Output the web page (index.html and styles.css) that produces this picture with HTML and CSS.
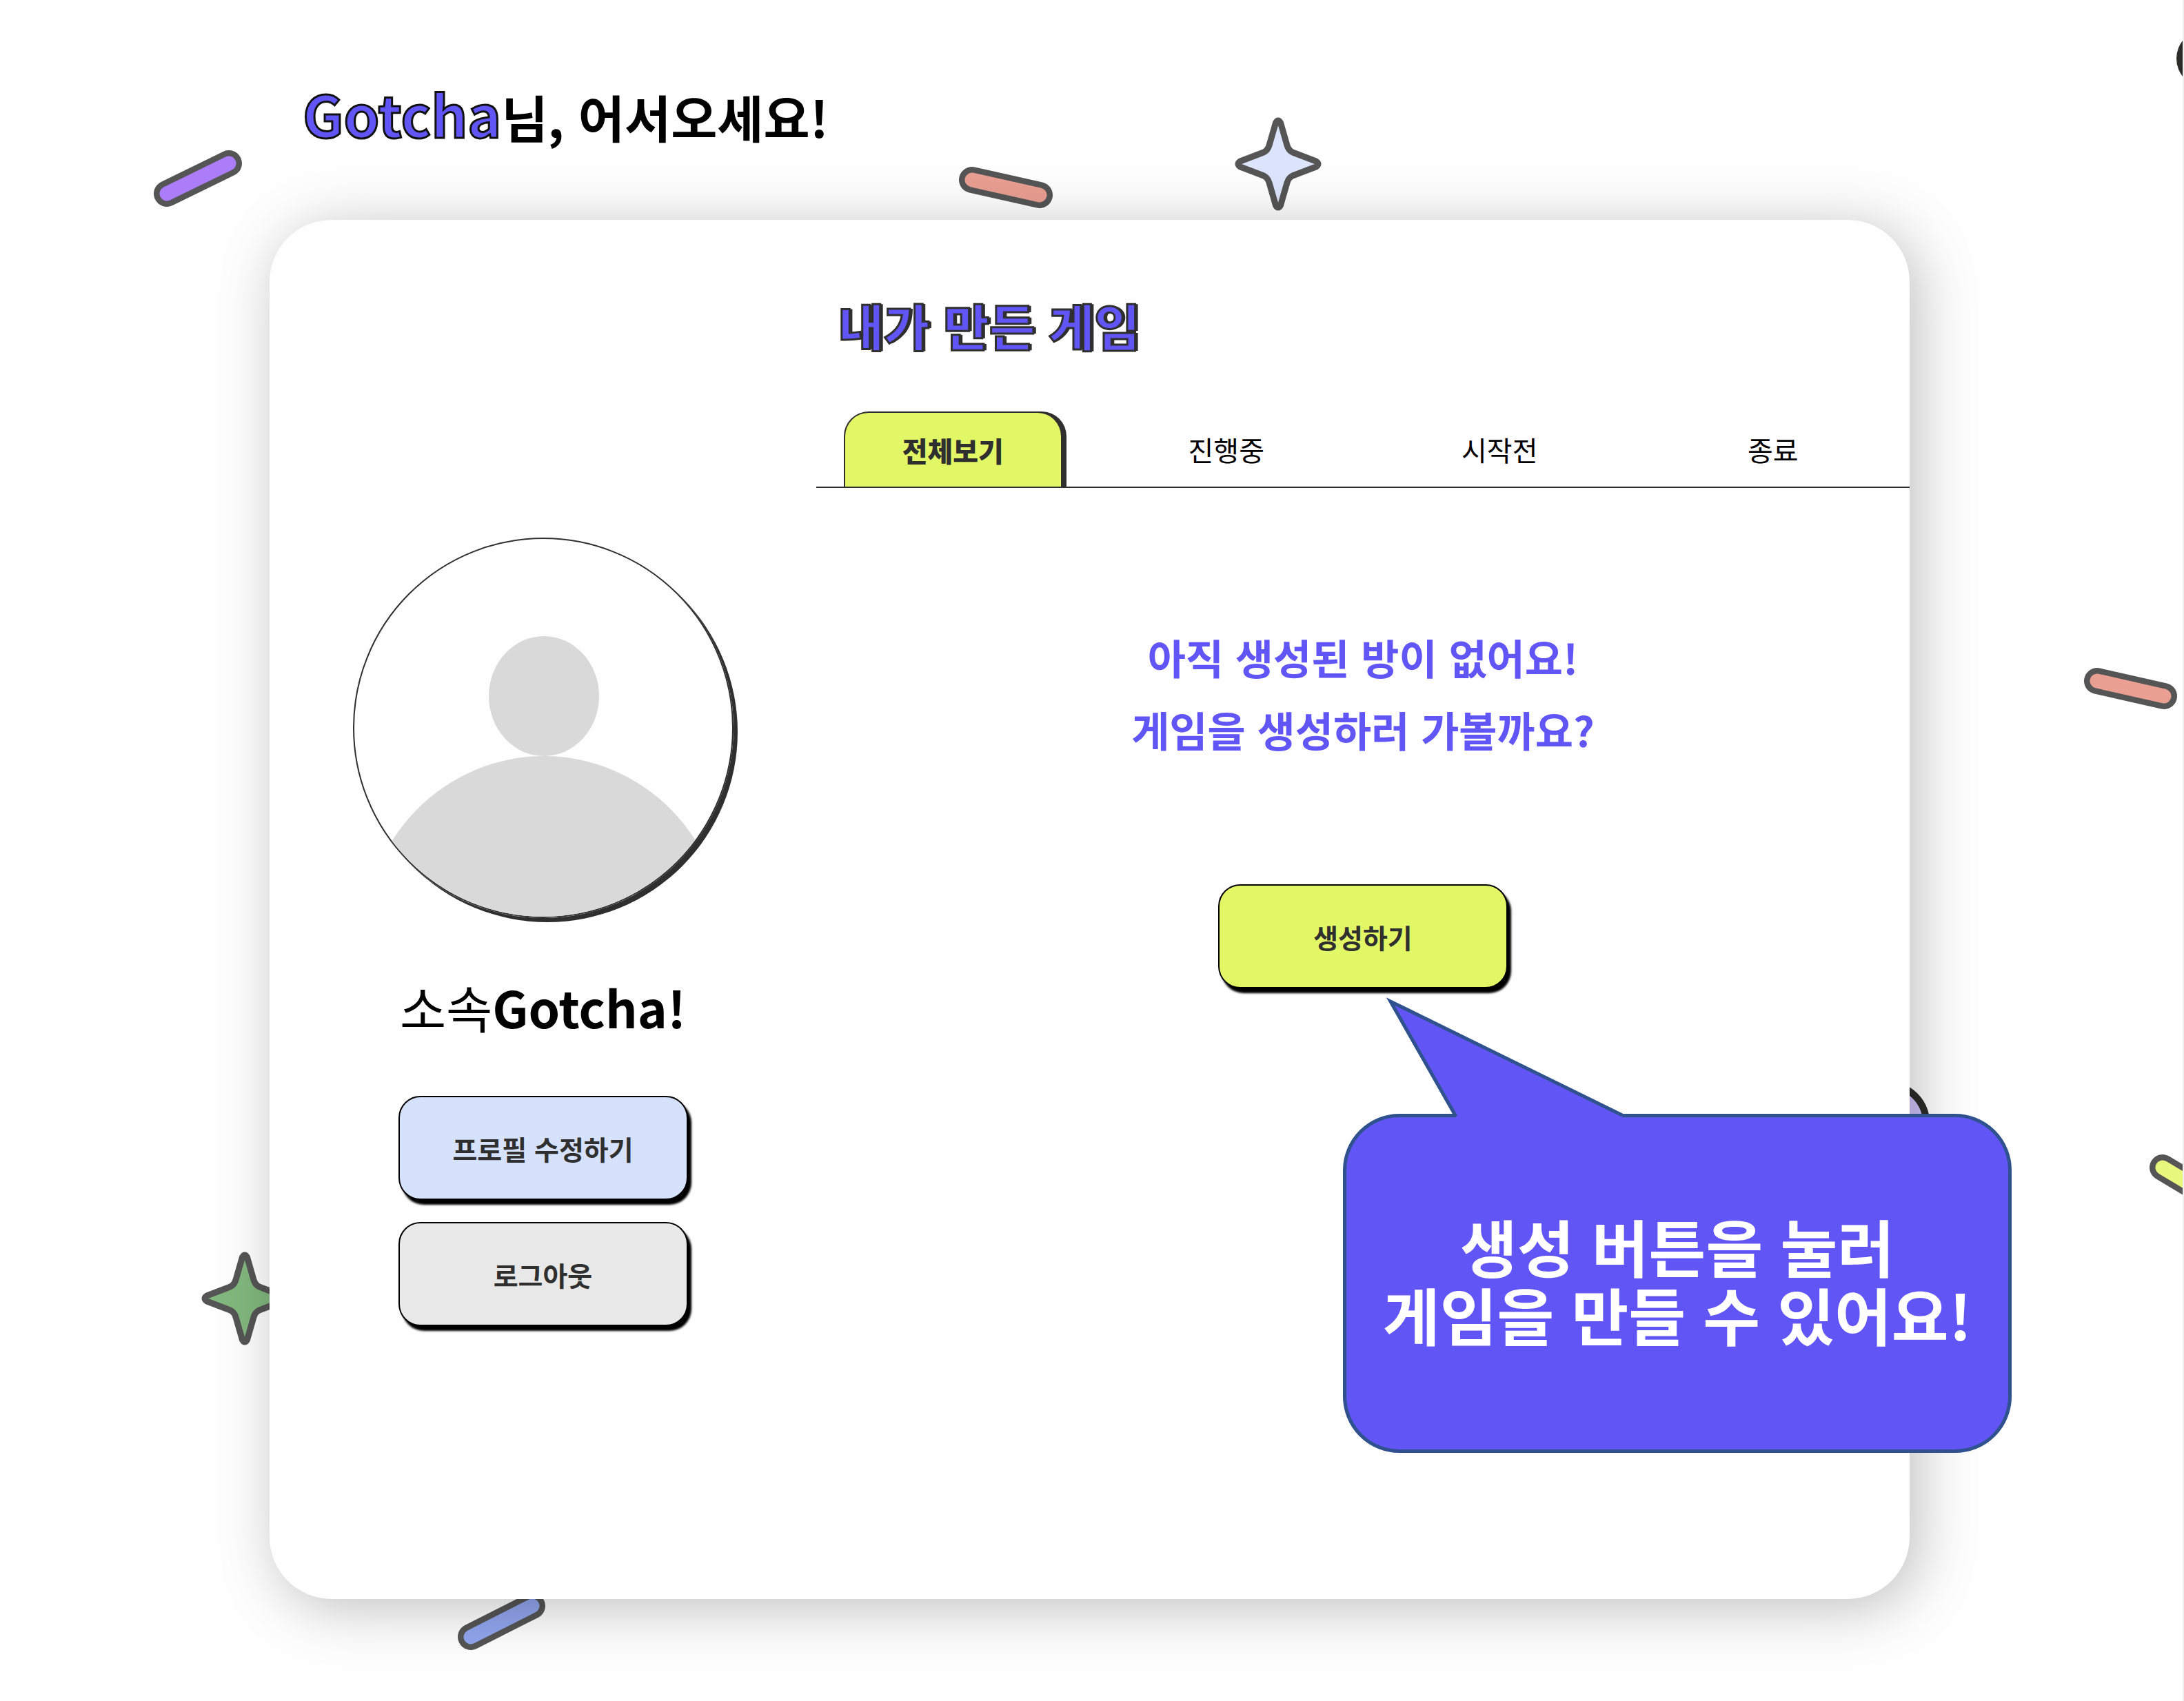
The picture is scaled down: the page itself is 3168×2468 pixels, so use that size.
FILE: index.html
```html
<!DOCTYPE html>
<html lang="ko">
<head>
<meta charset="utf-8">
<meta name="viewport" content="width=device-width, initial-scale=1">
<title>Gotcha 마이페이지</title>
<link rel="stylesheet" href="styles.css">
</head>
<body>
<div class="page">
  <svg class="deco deco-purple" viewBox="0 0 128 82" aria-hidden="true"><path class="pill-edge" d="M19 63 109 19"/><path class="pill-fill" stroke="#ab7df9" d="M19 63 109 19"/></svg>
  <svg class="deco deco-coral" viewBox="0 0 136 60" aria-hidden="true"><path class="pill-edge" d="M19 19 117 41"/><path class="pill-fill" stroke="#e99f92" d="M19 19 117 41"/></svg>
  <svg class="deco deco-sky" viewBox="-64 -70 128 140" aria-hidden="true"><path class="star" fill="#dde5fd" d="M-3.5-60Q0-66 3.5-60L13-27Q15-20 21-17L55-4Q61 0 55 4L21 17Q15 20 13 27L3.500 60Q0 66-3.500 60L-13 27Q-15 20-21 17L-55 4Q-61 0-55-4L-21-17Q-15-20-13-27Z"/></svg>
  <svg class="deco deco-dot" viewBox="0 0 84 84" aria-hidden="true"><circle cx="42" cy="42" r="42" fill="#2b2b2a"/></svg>
  <svg class="deco deco-coral-right" viewBox="0 0 136 60" aria-hidden="true"><path class="pill-edge" d="M19 19 116 41"/><path class="pill-fill" stroke="#e99f92" d="M19 19 116 41"/></svg>
  <svg class="deco deco-yellow" viewBox="0 0 120 90" aria-hidden="true"><path class="pill-edge" d="M19 19 101 68"/><path class="pill-fill" stroke="#e7f97c" d="M19 19 101 68"/></svg>
  <svg class="deco deco-ball" viewBox="0 0 120 120" aria-hidden="true"><circle cx="60" cy="60" r="55" fill="#cfc4fb" stroke="#2b2b2a" stroke-width="10"/></svg>
  <svg class="deco deco-green" viewBox="-64 -70 128 140" aria-hidden="true"><path class="star" fill="#82b87e" d="M-3.5-60Q0-66 3.5-60L13-27Q15-20 21-17L55-4Q61 0 55 4L21 17Q15 20 13 27L3.500 60Q0 66-3.500 60L-13 27Q-15 20-21 17L-55 4Q-61 0-55-4L-21-17Q-15-20-13-27Z"/></svg>
  <svg class="deco deco-blue" viewBox="0 0 128 84" aria-hidden="true"><path class="pill-edge" d="M19 65 108 20"/><path class="pill-fill" stroke="#92a6ef" d="M19 65 108 20"/></svg>

  <header class="greeting">
    <h1 class="greeting-text"><span class="greeting-name">Gotcha</span>님, 어서오세요!</h1>
  </header>

  <main class="card">
    <aside class="profile">
      <svg class="avatar" viewBox="0 0 548 548" role="img" aria-label="프로필 이미지">
        <ellipse cx="275" cy="228" rx="80" ry="87"/>
        <ellipse cx="275" cy="583" rx="262" ry="268"/>
      </svg>
      <p class="profile-name">소속<strong>Gotcha!</strong></p>
      <div class="profile-actions">
        <button type="button" class="btn btn-blue">프로필 수정하기</button>
        <button type="button" class="btn btn-gray">로그아웃</button>
      </div>
    </aside>

    <section class="games">
      <h2 class="games-title">내가 만든 게임</h2>
      <div class="tabs" role="tablist">
        <button type="button" class="tab tab-active" role="tab" aria-selected="true">전체보기</button>
        <button type="button" class="tab" role="tab" aria-selected="false">진행중</button>
        <button type="button" class="tab" role="tab" aria-selected="false">시작전</button>
        <button type="button" class="tab" role="tab" aria-selected="false">종료</button>
      </div>
      <div class="empty">
        <p class="empty-text">아직 생성된 방이 없어요!<br>게임을 생성하러 가볼까요?</p>
        <div class="create">
          <button type="button" class="btn btn-lime">생성하기</button>
          <div class="callout" role="tooltip">
            <svg class="callout-tail" viewBox="0 0 360 176" aria-hidden="true"><path d="M106 176V171L11 8 347 173V176Z" fill="#6155f5"/><path d="M106 175 11 8 347 173" fill="none" stroke="#2f528f" stroke-width="5" stroke-miterlimit="10"/></svg>
            생성 버튼을 눌러<br>게임을 만들 수 있어요!
          </div>
        </div>
      </div>
    </section>
  </main>
</div>
</body>
</html>
```
FILE: styles.css
```css
* {
  box-sizing: border-box;
}

body {
  margin: 0;
  background: #fefefe;
  color: #000;
  font-family: "Noto Sans CJK KR", "Noto Sans", sans-serif;
}

h1,
h2,
p {
  margin: 0;
}

button {
  font-family: inherit;
  cursor: pointer;
}

.page {
  position: relative;
  display: flex;
  flex-direction: column;
  min-height: 100vh;
  padding: 0 396px 148px 391px;
  border-right: 2px solid #efefef;
  overflow: hidden;
}

/* Confetti behind the card */
.deco {
  position: absolute;
}

.pill-edge,
.pill-fill {
  fill: none;
  stroke-linecap: round;
}

.pill-edge {
  stroke: #555;
  stroke-width: 38;
}

.pill-fill {
  stroke-width: 21;
}

.star {
  stroke: #555;
  stroke-width: 9;
  stroke-linejoin: round;
}

.deco-purple { left: 223px; top: 218px; width: 128px; }
.deco-coral { left: 1391px; top: 242px; width: 136px; }
.deco-sky { left: 1790px; top: 168px; width: 128px; }
.deco-dot { right: -75px; top: 43px; width: 84px; }
.deco-coral-right { right: 7px; top: 969px; width: 136px; }
.deco-yellow { right: -72px; top: 1675px; width: 120px; }
.deco-ball { right: 367px; top: 1569px; width: 120px; }
.deco-green { left: 291px; top: 1814px; width: 128px; }
.deco-blue { left: 664px; bottom: 74px; width: 128px; }

.greeting {
  position: relative;
  height: 319px;
  padding: 104px 48px 0;
}

.greeting-text {
  font-size: 73px;
  font-weight: 700;
  line-height: 120px;
}

.greeting-name {
  color: #6155f5;
  font-size: 83px;
  -webkit-text-stroke: 3px #111;
}

.card {
  position: relative;
  display: grid;
  flex: 1;
  grid-template-columns: 1fr 2fr;
  border-radius: 90px;
  background: #fefefe;
  box-shadow: 12px 12px 84px rgba(0, 0, 0, 0.25);
}

.profile {
  display: flex;
  flex-direction: column;
  align-items: center;
  padding-top: 461px;
}

.avatar {
  width: 552px;
  height: 552px;
  border: 2px solid #2f2f2f;
  border-radius: 50%;
  box-shadow: 6px 6px 0 #2f2f2f;
  fill: #d9d9d9;
}

.profile-name {
  margin-top: 68px;
  font-size: 73px;
  line-height: 120px;
}

.profile-actions {
  display: grid;
  gap: 32px;
  margin-top: 70px;
}

.btn {
  width: 420px;
  height: 151px;
  border: 2px solid #000;
  border-radius: 32px;
  box-shadow: 5px 7px 3px #000;
  color: #2f2f2f;
  font-size: 39px;
  font-weight: 700;
}

.btn-blue { background: #d6e1fc; }
.btn-gray { background: #e8e8e8; }
.btn-lime { background: #e2f765; }

.games {
  padding-top: 92px;
}

.games-title {
  padding-left: 32px;
  color: #6155f5;
  font-size: 72px;
  font-weight: 900;
  line-height: 120px;
  -webkit-text-stroke: 3px #2f2f2f;
  text-shadow: 4px 0 0 #2f2f2f;
}

.tabs {
  display: grid;
  grid-template-columns: repeat(4, 1fr);
  margin-top: 66px;
  border-bottom: 2px solid #2f2f2f;
}

.tab {
  width: 80%;
  height: 109px;
  margin: 0 auto;
  padding: 0;
  border: 0;
  background: none;
  color: #000;
  font-size: 40px;
  font-weight: 400;
}

.tab-active {
  border: 2px solid #2f2f2f;
  border-bottom: 0;
  border-radius: 36px 36px 0 0;
  background: #e2f765;
  box-shadow: 6px 0 0 #2f2f2f;
  color: #2f2f2f;
  font-weight: 900;
}

.empty {
  display: flex;
  flex-direction: column;
  align-items: center;
  margin-top: 192px;
}

.empty-text {
  color: #6155f5;
  font-size: 60px;
  font-weight: 700;
  line-height: 105px;
  text-align: center;
}

.create {
  position: relative;
  margin-top: 173px;
}

.callout {
  position: absolute;
  top: 333px;
  left: 181px;
  width: 970px;
  padding: 137px 0 147px;
  border: 5px solid #2f528f;
  border-radius: 82px;
  background: #6155f5;
  color: #fff;
  font-size: 90px;
  font-weight: 700;
  line-height: 99px;
  text-align: center;
  white-space: nowrap;
}

.callout-tail {
  position: absolute;
  top: -176px;
  left: 53px;
  width: 360px;
}
```
